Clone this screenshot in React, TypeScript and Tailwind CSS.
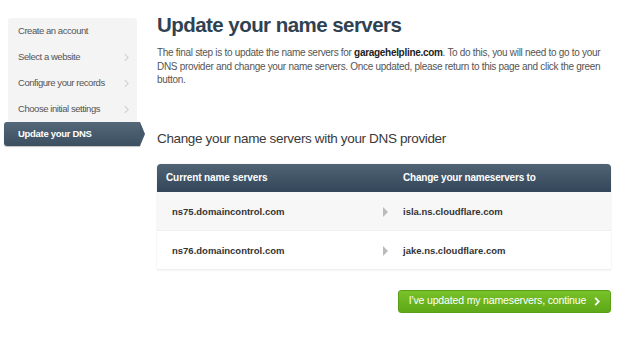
import React from 'react';

const steps = ['Create an account', 'Select a website', 'Configure your records', 'Choose initial settings'];

const rows = [
  { from: 'ns75.domaincontrol.com', to: 'isla.ns.cloudflare.com', bg: 'bg-[#f7f7f7]' },
  { from: 'ns76.domaincontrol.com', to: 'jake.ns.cloudflare.com', bg: 'bg-white' },
];

const Chevron = ({ className, width = 1.3 }: { className?: string; width?: number }) => (
  <svg viewBox="0 0 6 10" className={className} fill="none" stroke="currentColor" strokeWidth={width}>
    <path d="M1 1l4 4-4 4" />
  </svg>
);

const Sidebar = () => (
  <aside className="w-[146px] shrink-0 pt-[18px]">
    <div className="ml-[8px] w-[129px] bg-[#f4f4f4] rounded-t-[3px]">
      {steps.map((s, i) => (
        <div key={s} className="h-[26px] flex items-center justify-between pl-[10px] pr-[8px] text-[9.5px] tracking-[-0.45px] text-[#555]">
          <span>{s}</span>
          {i > 0 && <Chevron className="w-[5px] h-[9px] text-[#d0d0d0]" />}
        </div>
      ))}
    </div>
    <div className="relative ml-[4px] w-[136px] h-[24px] rounded-l-[3px] bg-gradient-to-b from-[#54687a] to-[#3c4f60] flex items-center pl-[14px] text-[9.5px] tracking-[-0.3px] font-bold text-white shadow-[0_1px_1px_rgba(0,0,0,0.25)]">
      Update your DNS
      <span className="absolute right-[-5px] top-0 w-0 h-0 border-y-[12px] border-y-transparent border-l-[5px] border-l-[#46596a]" />
    </div>
  </aside>
);

const App = () => {
  return (
    <div className="w-[628px] h-[345px] bg-white flex font-['Liberation_Sans',Arial,sans-serif] overflow-hidden">
      <Sidebar />
      <main className="ml-[11px] w-[454px] pt-[10px]">
        <h1 className="text-[20.5px] leading-[30px] tracking-[-0.55px] font-bold text-[#2f4252]">Update your name servers</h1>
        <p className="mt-[6px] text-[10px] leading-[13.5px] tracking-[-0.3px] text-[#555]">
          The final step is to update the name servers for <b className="text-[#222]">garagehelpline.com</b>. To do this, you will need to go to your DNS provider and change your name servers. Once updated, please return to this page and click the green button.
        </p>
        <h2 className="mt-[43px] text-[13.5px] leading-[18px] tracking-[-0.35px] text-[#3a3a3a]">Change your name servers with your DNS provider</h2>
        <div className="mt-[16px] rounded-t-[4px] overflow-hidden shadow-[0_0_2px_rgba(0,0,0,0.12)]">
          <div className="h-[28px] flex items-center bg-gradient-to-b from-[#4f6374] to-[#34475a] text-[10px] font-bold text-white">
            <span className="w-[246px] pl-[9px] tracking-[-0.1px]">Current name servers</span>
            <span className="tracking-[-0.2px]">Change your nameservers to</span>
          </div>
          {rows.map((r) => (
            <div key={r.from} className={`${r.bg} h-[39px] pt-[3px] flex items-center text-[9.5px] font-bold text-[#333] border-b border-[#f0f0f0]`}>
              <span className="w-[226px] pl-[15px]">{r.from}</span>
              <span className="w-[20px] flex justify-start">
                <span className="w-0 h-0 border-y-[5px] border-y-transparent border-l-[5px] border-l-[#bbb]" />
              </span>
              <span>{r.to}</span>
            </div>
          ))}
        </div>
        <div className="mt-[20px] flex justify-end">
          <button className="w-[213px] h-[23px] rounded-[3px] bg-gradient-to-b from-[#78c22a] to-[#5ea716] border border-[#5a9f15] flex items-center justify-center gap-[8px] text-[10.5px] tracking-[-0.15px] text-white whitespace-nowrap">
            <span>I've updated my nameservers, continue</span>
            <Chevron className="w-[6px] h-[9px] text-white" width={2} />
          </button>
        </div>
      </main>
    </div>
  );
};

export default App;
